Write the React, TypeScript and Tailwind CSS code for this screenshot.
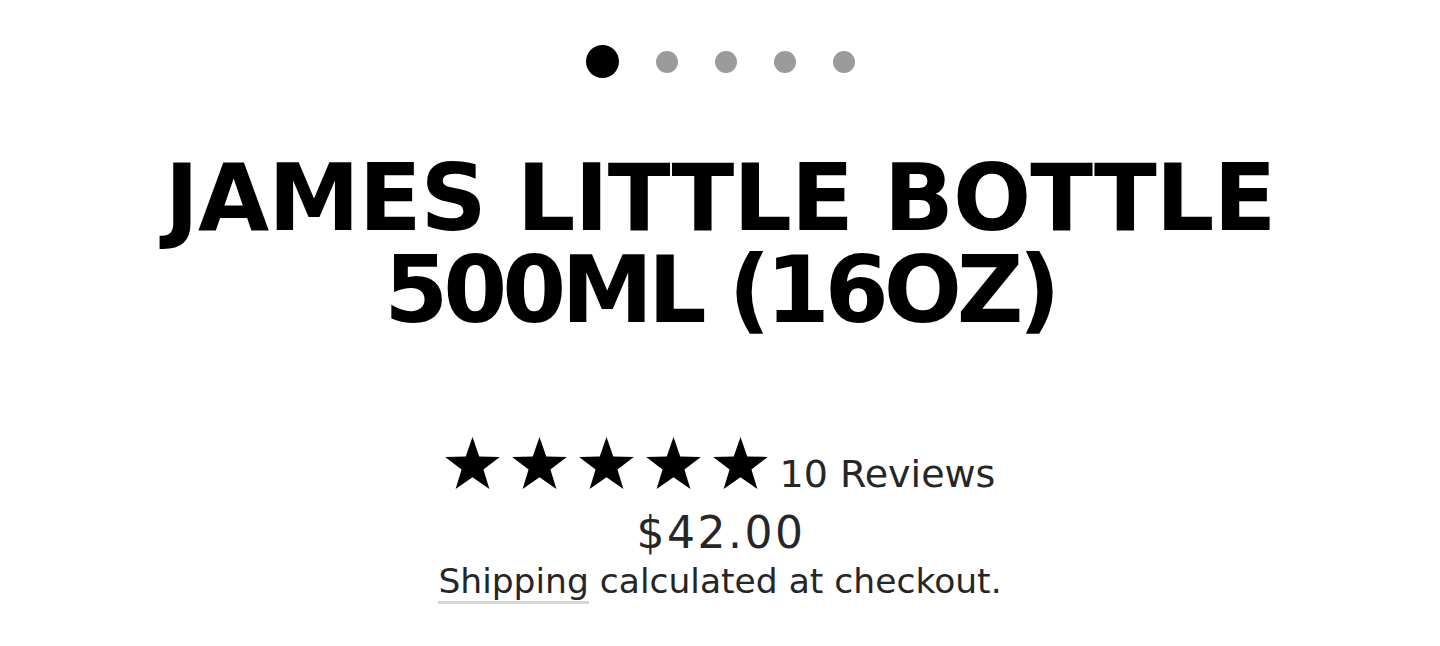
import React from "react";

function Star() {
  return (
    <svg viewBox="0 0 55 52.3" className="h-[52px] w-[55px]" fill="currentColor">
      <polygon points="27.5,0 34.3,19.6 55,20 38.5,32.6 44.5,52.3 27.5,40.5 10.5,52.3 16.5,32.6 0,20 20.7,19.6" />
    </svg>
  );
}

export default function App() {
  const dots = [0, 1, 2, 3, 4];

  return (
    <div className="flex min-h-[646px] w-full flex-col items-center bg-white pt-[45px] text-black">
      <div className="flex items-center gap-[37px]">
        {dots.map((i) =>
          i === 0 ? (
            <span key={i} className="block h-[33px] w-[33px] rounded-full bg-black" />
          ) : (
            <span key={i} className="block h-[22px] w-[22px] rounded-full bg-[#9b9b9b]" />
          ),
        )}
      </div>

      <h1 className="mt-[75px] flex flex-col items-center text-center font-['DejaVu_Sans',sans-serif] text-[92px] font-bold leading-[92px]">
        <span className="tracking-[-1px]">JAMES LITTLE BOTTLE</span>
        <span className="tracking-[-5px]">500ML (16OZ)</span>
      </h1>

      <div className="mt-[100px] flex h-[52px] gap-[12px]">
        {dots.map((i) => (
          <Star key={i} />
        ))}
        <span className="self-end font-['DejaVu_Sans',sans-serif] text-[38px] leading-[30px] text-[#262626]">
          10 Reviews
        </span>
      </div>

      <div className="mt-[19px] pl-[2px] font-['DejaVu_Sans',sans-serif] text-[44px] leading-[50px] tracking-[2.5px] text-[#262626]">
        $42.00
      </div>

      <p className="mt-[3px] font-['DejaVu_Sans',sans-serif] text-[34.5px] leading-[40px] text-[#262626]">
        <span className="border-b-[3px] border-[#d6d6d6]">Shipping</span> calculated at checkout.
      </p>
    </div>
  );
}
